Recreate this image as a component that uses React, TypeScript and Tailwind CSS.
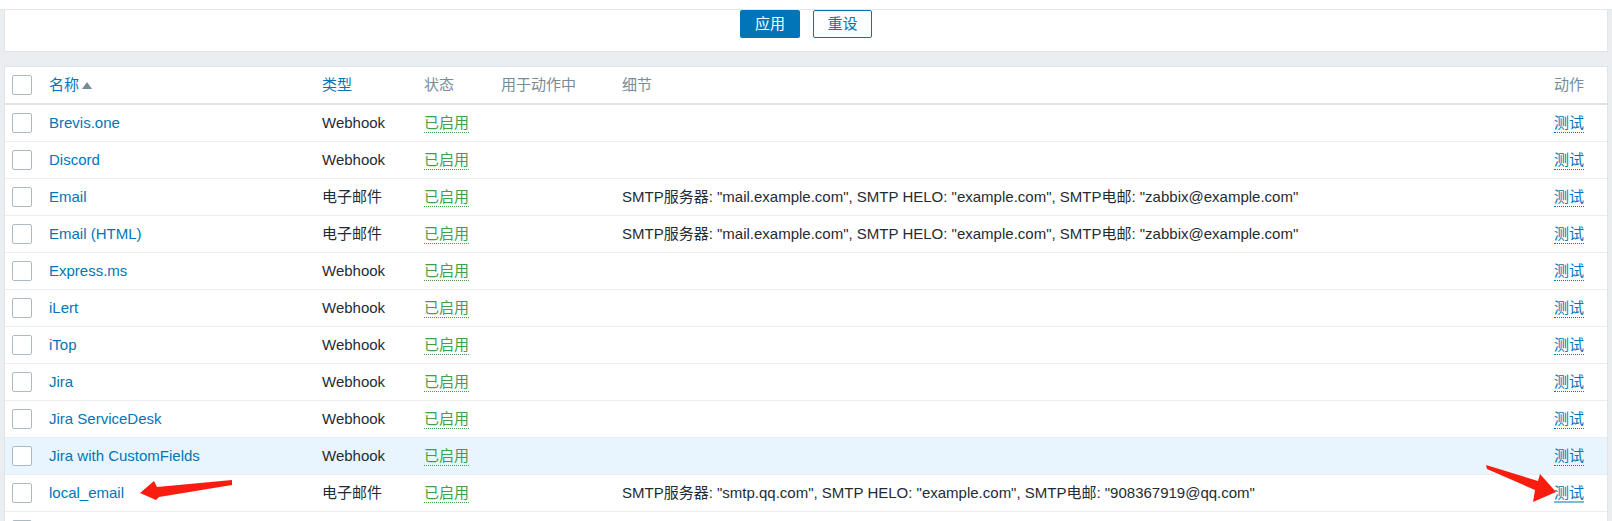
import React from "react";

interface MediaType {
  name: string;
  type: string;
  details: string;
}

const emailDetails =
  'SMTP服务器: "mail.example.com", SMTP HELO: "example.com", SMTP电邮: "zabbix@example.com"';

const mediaTypes: MediaType[] = [
  { name: "Brevis.one", type: "Webhook", details: "" },
  { name: "Discord", type: "Webhook", details: "" },
  { name: "Email", type: "电子邮件", details: emailDetails },
  { name: "Email (HTML)", type: "电子邮件", details: emailDetails },
  { name: "Express.ms", type: "Webhook", details: "" },
  { name: "iLert", type: "Webhook", details: "" },
  { name: "iTop", type: "Webhook", details: "" },
  { name: "Jira", type: "Webhook", details: "" },
  { name: "Jira ServiceDesk", type: "Webhook", details: "" },
  { name: "Jira with CustomFields", type: "Webhook", details: "" },
  {
    name: "local_email",
    type: "电子邮件",
    details: 'SMTP服务器: "smtp.qq.com", SMTP HELO: "example.com", SMTP电邮: "908367919@qq.com"',
  },
];

const cols = "grid grid-cols-[44px_273px_102px_77px_121px_1fr_auto] items-center";

function Checkbox() {
  return <div className="w-5 h-5 rounded-[2px] border border-[#acbbc2] bg-white" />;
}

export default function App() {
  return (
    <div
      className="relative w-[1612px] h-[521px] overflow-hidden bg-[#ebeef0] text-[15px] text-[#1f2c33]"
      style={{ fontFamily: '"Liberation Sans", Arial, "Noto Sans CJK SC", sans-serif' }}
    >
      {/* top strip */}
      <div className="h-[10px] bg-white border-b border-[#e3e7ea]" />

      <div className="px-[4px]">
        {/* Filter buttons */}
        <div className="h-[42px] bg-white border-x border-b border-[#dfe4e7] flex justify-center gap-[13px]">
          <button className="w-[60px] h-[28px] rounded-[2px] bg-[#0275b8] text-white">应用</button>
          <button className="w-[59px] h-[28px] rounded-[2px] border border-[#0275b8] bg-white text-[#0275b8]">
            重设
          </button>
        </div>

        {/* Table */}
        <div className="mt-[14px] bg-white border border-[#dfe4e7]">
          <div className={`${cols} h-[38px] border-b-2 border-[#dfe4e7] text-[#768d99]`}>
            <div className="pl-[7px]">
              <Checkbox />
            </div>
            <div className="flex items-center gap-[3px] text-[#0275b8]">
              名称
              <span className="w-0 h-0 border-x-[5px] border-x-transparent border-b-[7px] border-b-[#768d99]" />
            </div>
            <div className="text-[#0275b8]">类型</div>
            <div>状态</div>
            <div>用于动作中</div>
            <div>细节</div>
            <div className="pr-[23px]">动作</div>
          </div>

          {mediaTypes.map((m) => {
            const highlighted = m.name === "Jira with CustomFields";
            const last = m.name === "local_email";
            return (
              <div
                key={m.name}
                className={`${cols} h-[37px] border-b border-[#ebeef0] ${highlighted ? "bg-[#e8f5ff]" : ""}`}
              >
                <div className="pl-[7px]">
                  <Checkbox />
                </div>
                <div className="text-[#0275b8]">{m.name}</div>
                <div>{m.type}</div>
                <div>
                  <span className="text-[#429e47] border-b border-dotted border-[#429e47] pb-[1px]">已启用</span>
                </div>
                <div />
                <div className="whitespace-nowrap">{m.details}</div>
                <div className="pr-[23px]">
                  {last ? (
                    <span className="text-[#0275b8] border-b-2 border-solid border-[#7db7dc]">测试</span>
                  ) : (
                    <span className="text-[#0275b8] border-b border-dotted border-[#0275b8] pb-[1px]">测试</span>
                  )}
                </div>
              </div>
            );
          })}

          {/* next row, cut by the window edge */}
          <div className="h-[37px] pt-[8px] pl-[7px]">
            <Checkbox />
          </div>
        </div>
      </div>

      {/* Annotation arrows */}
      <svg className="absolute inset-0 pointer-events-none" width="1612" height="521" viewBox="0 0 1612 521">
        <polygon points="140,493 154,481 157,487 232,480 232,485 159,497 156,500" fill="#f81d0f" />
        <polygon points="1486,465 1538,481 1540,474 1556,492 1533,502 1535,490 1487,469" fill="#f81d0f" />
      </svg>
    </div>
  );
}
